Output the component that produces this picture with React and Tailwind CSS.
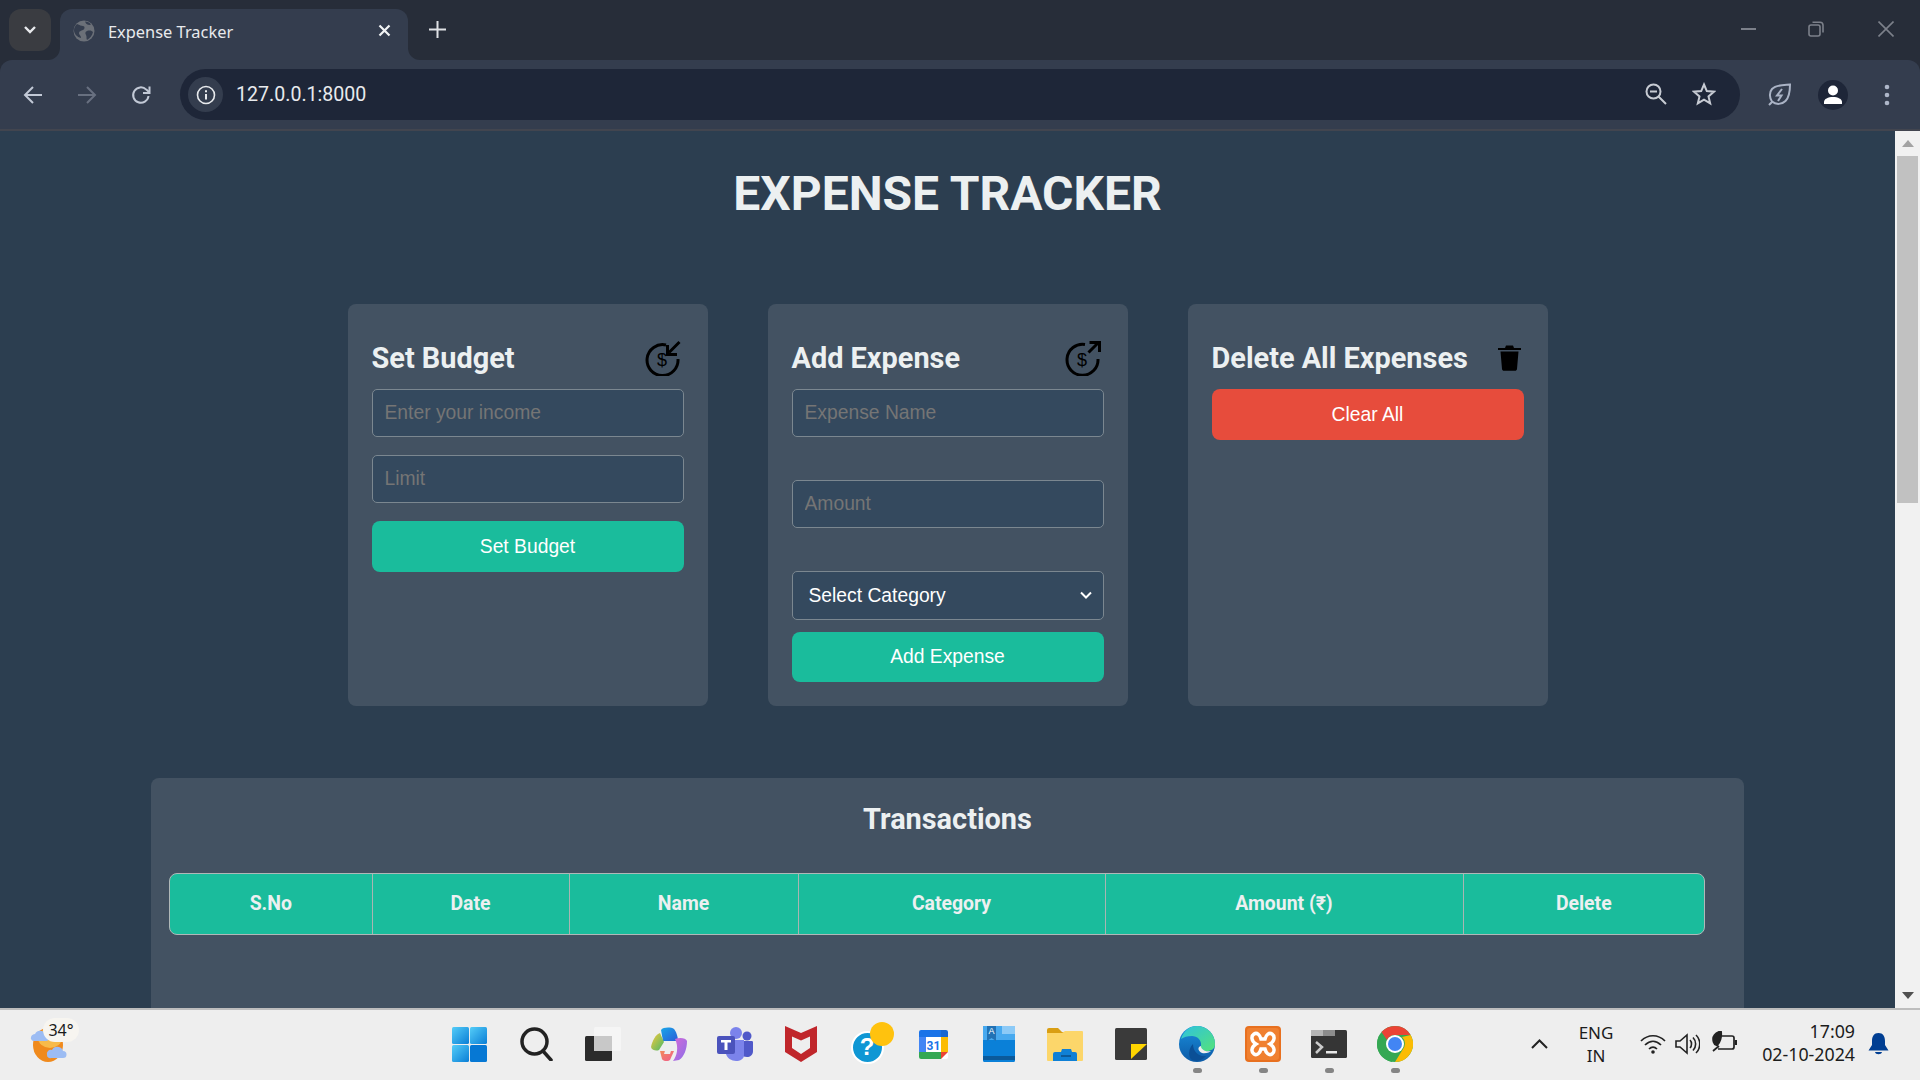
import React from "react";

const roboto = "font-['Roboto',sans-serif]";
const arial = "font-['Liberation_Sans',Arial,sans-serif]";
const noto = "font-['Noto_Sans',sans-serif]";

function Back({ color }) {
  return (
    <svg width="20" height="20" viewBox="0 0 20 20" fill="none" stroke={color} strokeWidth="2">
      <path d="M19 10H2M10 2l-8 8 8 8" />
    </svg>
  );
}
function Forward({ color }) {
  return (
    <svg width="20" height="20" viewBox="0 0 20 20" fill="none" stroke={color} strokeWidth="2">
      <path d="M1 10h17M10 2l8 8-8 8" />
    </svg>
  );
}
function Reload() {
  return (
    <svg width="20" height="20" viewBox="0 0 20 20" fill="none" stroke="#c2c9d6" strokeWidth="2">
      <path d="M17.5 11a7.7 7.7 0 1 1-2.2-6.4L18 7" />
      <path d="M18.5 1.5V8H12" strokeWidth="2" />
    </svg>
  );
}
function ToolbarCell({ children }) {
  return <div className="w-[54px] h-[51px] flex items-center justify-center shrink-0">{children}</div>;
}
function Concave({ side }) {
  return (
    <div className={side === "l" ? "absolute bottom-0 left-[-12px] w-3 h-3 bg-[#343d4e]" : "absolute bottom-0 right-[-12px] w-3 h-3 bg-[#343d4e]"}>
      <div className={side === "l" ? "w-full h-full bg-[#272d39] rounded-br-[12px]" : "w-full h-full bg-[#272d39] rounded-bl-[12px]"} />
    </div>
  );
}

function Browser() {
  return (
    <div className="shrink-0 bg-[#272d39]">
      <div className="h-[60px] flex items-start">
        <div className="ml-[9px] mt-[9px] w-[42px] h-[42px] rounded-[12px] bg-[#3a3c41] flex items-center justify-center">
          <svg width="14" height="10" viewBox="0 0 14 10" fill="none" stroke="#e8eaed" strokeWidth="2.4"><path d="M2 2l5 5 5-5" /></svg>
        </div>
        <div className="relative ml-[9px] mt-[9px] w-[348px] h-[51px] rounded-t-[12px] bg-[#343d4e] flex items-center">
          <Concave side="l" />
          <Concave side="r" />
          <svg className="ml-[13px] mb-[8px]" width="22" height="22" viewBox="0 0 22 22">
            <circle cx="11" cy="11" r="10.5" fill="#6b7078" />
            <path d="M4 4c3 1 4 2 6 2s2 3 0 4-4 1-4 3 2 2 2 5c-4-1-7-4-7-8 0-2 1-4 3-6zM14 11c3-1 5 0 6 1-1 4-3 6-6 8-1-2 0-3-1-5s-1-3 1-4zM12 1.500c2 0 5 1 6 3-2 1-4 0-5-1z" fill="#343d4e" />
          </svg>
          <span className={`ml-[13px] mb-[5px] text-[16.4px] text-[#e8eaed] whitespace-nowrap ${noto} w-[270px]`}>Expense Tracker</span>
          <svg className="mb-[9px]" width="13" height="13" viewBox="0 0 13 13" stroke="#f1f3f4" strokeWidth="2.2"><path d="M1.500 1.500l10 10M11.500 1.500l-10 10" /></svg>
        </div>
        <svg className="ml-[21px] mt-[21px]" width="17" height="17" viewBox="0 0 17 17" stroke="#dfe1e5" strokeWidth="2"><path d="M8.500 0v17M0 8.500h17" /></svg>
        <div className="flex-1" />
        <div className="flex items-center h-[58px]">
          <div className="w-[64px] flex justify-center"><div className="w-[15px] h-[2px] bg-[#7c808a]" /></div>
          <div className="w-[72px] flex justify-center">
            <svg width="16" height="16" viewBox="0 0 16 16" fill="none" stroke="#7c808a" strokeWidth="1.600"><rect x="1" y="4" width="11" height="11" rx="2" /><path d="M4.500 1.200h7.500a3 3 0 0 1 3 3v7.300" /></svg>
          </div>
          <div className="w-[68px] flex justify-center">
            <svg width="16" height="16" viewBox="0 0 16 16" stroke="#7c808a" strokeWidth="1.600"><path d="M.5.500l15 15M15.500.500l-15 15" /></svg>
          </div>
        </div>
      </div>
      <div className="h-[69px] bg-[#343d4e] rounded-t-[12px] flex items-start pt-[9px] pl-[6px] pr-[6px]">
        <ToolbarCell><Back color="#c2c9d6" /></ToolbarCell>
        <ToolbarCell><Forward color="#687080" /></ToolbarCell>
        <ToolbarCell><Reload /></ToolbarCell>
        <div className="ml-[12px] w-[1560px] h-[51px] rounded-full bg-[#1e2638] flex items-center pl-[8px]">
          <div className="w-[35px] h-[35px] rounded-full bg-[#343d4e] flex items-center justify-center">
            <svg width="20" height="20" viewBox="0 0 20 20" fill="none" stroke="#e8eaed" strokeWidth="1.600">
              <circle cx="10" cy="10" r="8.500" />
              <path d="M10 9v5.500M10 5.200v2" strokeWidth="2" />
            </svg>
          </div>
          <span className={`ml-[13px] text-[19.6px] text-[#e8eaed] ${roboto}`}>127.0.0.1:8000</span>
          <div className="flex-1" />
          <svg className="mr-[25px] mb-[2px]" width="22" height="22" viewBox="0 0 22 22" fill="none" stroke="#c7cbd3" strokeWidth="2">
            <circle cx="8.500" cy="8.500" r="7" />
            <path d="M5 8.500h7M13.500 13.500l7.500 7.500" />
          </svg>
          <svg className="mr-[24px] mb-[2px]" width="24" height="24" viewBox="0 0 24 24" fill="none" stroke="#c7cbd3" strokeWidth="2">
            <path d="M12 2.500l2.800 6.600 7.200.6-5.500 4.700 1.700 7-6.200-3.700-6.200 3.700 1.700-7L2 9.700l7.200-.6z" />
          </svg>
        </div>
        <div className="ml-[12px] flex">
          <ToolbarCell>
            <svg width="23" height="23" viewBox="0 0 23 23" fill="none" stroke="#aab3c5" strokeWidth="2">
              <path d="M22 1.500C16 2 8 1.500 4 6c-3 3.500-2.500 9 0 12.500 4 3.500 10 3 13.500-.5 4-4 4.500-10.500 4.500-16.500zM1 22l3-3" />
              <path d="M14 6l-5 6.500h4.500L10 18" />
            </svg>
          </ToolbarCell>
          <ToolbarCell>
            <div className="w-[30px] h-[30px] rounded-full bg-[#1e2638] flex items-center justify-center">
              <svg width="20" height="20" viewBox="0 0 20 20" fill="#fff">
                <circle cx="10" cy="5.500" r="5" />
                <path d="M1 19v-2c0-3 4-5 9-5s9 2 9 5v2z" />
              </svg>
            </div>
          </ToolbarCell>
          <ToolbarCell>
            <svg width="6" height="22" viewBox="0 0 6 22" fill="#aeb7c9"><circle cx="3" cy="3" r="2.300" /><circle cx="3" cy="11" r="2.300" /><circle cx="3" cy="19" r="2.300" /></svg>
          </ToolbarCell>
        </div>
      </div>
      <div className="h-[2px] bg-[#42454f]" />
    </div>
  );
}

function DollarText() {
  return <text x="17" y="25.500" textAnchor="middle" fontSize="18" fontFamily="Liberation Sans" fill="#000">$</text>;
}
function BudgetIcon() {
  return (
    <svg width="36" height="36" viewBox="0 0 36 36" fill="none" stroke="#000" strokeWidth="3">
      <path d="M21 5a15.500 15.500 0 1 0 12 14" />
      <path d="M34.500 2L24 12.500M22.500 5v9.500H32" strokeWidth="3" />
      <g stroke="none"><DollarText /></g>
    </svg>
  );
}
function ExpenseIcon() {
  return (
    <svg width="36" height="36" viewBox="0 0 36 36" fill="none" stroke="#000" strokeWidth="3">
      <path d="M20 4.500a15.500 15.500 0 1 0 13 14.500" />
      <path d="M23.500 12.500L34 2M24.500 2.500H34.500V12" strokeWidth="3" />
      <g stroke="none"><DollarText /></g>
    </svg>
  );
}
function TrashIcon() {
  return (
    <svg width="23" height="26" viewBox="0 0 23 26" fill="#000">
      <path d="M0 3h23v2H0zM8 .5h7L16 3H7zM2.500 6.500h18L19 24c-.1 1-1 1.800-2 1.800H6c-1 0-1.900-.8-2-1.800z" />
    </svg>
  );
}

const inputCls = `w-full h-[48px] rounded-[5px] border border-[#7b8790] bg-[#34495e] px-[12px] text-[19.3px] text-white placeholder:text-[#757575] outline-none ${arial}`;
const btnCls = `w-full rounded-[8px] text-[19.3px] text-white ${arial}`;

function Heading({ title, icon, right }) {
  return (
    <div className="h-[61px] flex items-center justify-between">
      <h2 className={`text-[28.9px] font-bold text-[#ecf0f1] whitespace-nowrap ${roboto}`}>{title}</h2>
      <div className={right}>{icon}</div>
    </div>
  );
}

function Cards() {
  return (
    <div className="flex gap-[60px] mt-[79px]">
      <section className="w-[360px] h-[401.500px] bg-[#435262] rounded-[8px] px-[24px] pt-[24px]">
        <Heading title="Set Budget" icon={<BudgetIcon />} right="mr-[3px] mb-[2px]" />
        <div className="flex flex-col gap-[18px]">
          <input className={inputCls} placeholder="Enter your income" />
          <input className={inputCls} placeholder="Limit" />
          <button className={`${btnCls} h-[51px] pt-[1px] bg-[#1abc9c]`}>Set Budget</button>
        </div>
      </section>
      <section className="w-[360px] h-[401.500px] bg-[#435262] rounded-[8px] px-[24px] pt-[24px]">
        <Heading title="Add Expense" icon={<ExpenseIcon />} right="mr-[3px] mb-[2px]" />
        <div className="flex flex-col">
          <input className={inputCls} placeholder="Expense Name" />
          <input className={`${inputCls} mt-[43px]`} placeholder="Amount" />
          <div className="relative mt-[43px]">
            <select className={`appearance-none block w-full h-[49px] rounded-[5px] border border-[#7b8790] bg-[#34495e] pl-[16px] pt-[1px] pr-[30px] text-[19.3px] text-white outline-none ${arial}`}>
              <option>Select Category</option>
            </select>
            <svg className="absolute right-[12px] top-[20px] pointer-events-none" width="12" height="8" viewBox="0 0 12 8" fill="none" stroke="#fff" strokeWidth="2"><path d="M1 1.500l5 5 5-5" /></svg>
          </div>
          <button className={`${btnCls} mt-[12px] h-[50px] bg-[#1abc9c]`}>Add Expense</button>
        </div>
      </section>
      <section className="w-[360px] h-[401.500px] bg-[#435262] rounded-[8px] px-[24px] pt-[24px]">
        <Heading title="Delete All Expenses" icon={<TrashIcon />} right="mr-[3px] mb-[2px]" />
        <button className={`${btnCls} h-[51px] pt-[1px] bg-[#e74c3c]`}>Clear All</button>
      </section>
    </div>
  );
}

function Transactions() {
  const cols = ["S.No", "Date", "Name", "Category", "Amount (₹)", "Delete"];
  return (
    <section className="mt-[72px] w-[1593px] h-[400px] shrink-0 bg-[#435262] rounded-[8px] pl-[18px] pr-[39px]">
      <h2 className={`h-[85px] mb-[10px] flex items-center justify-center pl-[21px] text-[28.9px] font-bold text-[#ecf0f1] ${roboto}`}>Transactions</h2>
      <div className={`w-[1536px] h-[62px] grid grid-cols-[202.500px_197px_229px_307px_358px_1fr] bg-[#1abc9c] rounded-[8px] border border-[#b0b8b8] text-[19.4px] font-bold text-[#ecf0f1] ${roboto}`}>
        {cols.map((c, i) => (
          <div key={c} className={`flex items-center justify-center ${i < 5 ? "border-r border-[#a9b5b2]" : ""}`}>{c}</div>
        ))}
      </div>
    </section>
  );
}

function Scrollbar() {
  return (
    <div className="w-[25px] shrink-0 bg-[#f1f1f1] flex flex-col items-center">
      <div className="h-[25px] flex items-center justify-center">
        <svg width="12" height="7" viewBox="0 0 12 7" fill="#a3a3a3"><path d="M6 0l6 7H0z" /></svg>
      </div>
      <div className="w-[21px] h-[347px] bg-[#c1c1c1]" />
      <div className="flex-1" />
      <div className="h-[25px] flex items-center justify-center">
        <svg width="12" height="7" viewBox="0 0 12 7" fill="#505050"><path d="M6 7l6-7H0z" /></svg>
      </div>
    </div>
  );
}

function Weather() {
  return (
    <div className="relative w-[46px] h-[46px] ml-[30px]">
      <svg width="46" height="46" viewBox="0 0 46 46">
        <ellipse cx="18" cy="27" rx="15" ry="17" fill="#f08a1d" />
        <ellipse cx="20" cy="20" rx="12" ry="10" fill="#f7ba4a" />
        <path d="M1 21a4 4 0 0 1 4-5 6 6 0 0 1 11 1 3 3 0 0 1 0 6H4a3 3 0 0 1-3-2z" fill="#9cbcf3" />
        <path d="M17 37a4 4 0 0 1 5-5 6 6 0 0 1 11 1 3.500 3.500 0 0 1 0 7H21a3 3 0 0 1-4-3z" fill="#9cbcf3" />
      </svg>
      <div className={`absolute left-[13px] top-[0px] w-[36px] h-[24px] rounded-full bg-[#f7f5f0] flex items-center justify-center text-[16px] text-[#1a1a1a] ${noto}`}>34°</div>
    </div>
  );
}

function WinIcon() {
  return (
    <svg width="35" height="35" viewBox="0 0 35 35">
      <defs>
        <linearGradient id="wa" x1="0" y1="0" x2="1" y2="1"><stop offset="0" stopColor="#54cdf8" /><stop offset="1" stopColor="#0a7ed6" /></linearGradient>
      </defs>
      <rect x="0" y="0" width="17" height="17" rx="1.500" fill="url(#wa)" />
      <rect x="18" y="0" width="17" height="17" rx="1.500" fill="url(#wa)" />
      <rect x="0" y="18" width="17" height="17" rx="1.500" fill="url(#wa)" />
      <rect x="18" y="18" width="17" height="17" rx="1.500" fill="#0678d4" />
    </svg>
  );
}
function SearchIcon() {
  return (
    <svg width="34" height="34" viewBox="0 0 34 34" fill="none" stroke="#222" strokeWidth="3.500">
      <circle cx="14.500" cy="14.500" r="12.500" />
      <path d="M23 24l8 9" strokeLinecap="round" />
    </svg>
  );
}
function TaskViewIcon() {
  return (
    <svg width="36" height="34" viewBox="0 0 36 34">
      <rect x="0" y="9" width="27" height="25" rx="1.500" fill="#2b2b2b" />
      <rect x="9" y="0" width="27" height="24" rx="1.500" fill="#f5f5f5" />
      <rect x="9" y="9" width="18" height="15" fill="#c8c8c8" />
    </svg>
  );
}
function CopilotIcon() {
  return (
    <svg width="36" height="34" viewBox="0 0 36 34">
      <defs>
        <linearGradient id="ca" x1="0" y1="0" x2="1" y2="1"><stop offset="0" stopColor="#1aa7e8" /><stop offset="1" stopColor="#2a5bd8" /></linearGradient>
        <linearGradient id="cb" x1="0" y1="0" x2="1" y2="1"><stop offset="0" stopColor="#d56ad8" /><stop offset="1" stopColor="#8a6ee8" /></linearGradient>
        <linearGradient id="cc" x1="0" y1="0" x2="1" y2="1"><stop offset="0" stopColor="#f7c93a" /><stop offset="1" stopColor="#49b868" /></linearGradient>
        <linearGradient id="cd" x1="0" y1="0" x2="1" y2="1"><stop offset="0" stopColor="#f28a5a" /><stop offset="1" stopColor="#ef5d8e" /></linearGradient>
      </defs>
      <path d="M10 3c2-3 10-3 13-1 2 2 4 8 4 12H12z" fill="url(#ca)" />
      <path d="M0 20c1-6 5-13 9-14l4 9-5 8c-2 1-7 1-8-3z" fill="url(#cc)" />
      <path d="M24 12c5-2 11-1 12 2 0 8-3 16-8 19l-6 1c4-5 6-14 2-22z" fill="url(#cb)" />
      <path d="M9 24h14l-4 9c-3 2-7 1-8-1z" fill="url(#cd)" />
      <path d="M16 17h6l-3 10h-6z" fill="#eee" />
    </svg>
  );
}
function TeamsIcon() {
  return (
    <svg width="36" height="34" viewBox="0 0 36 34">
      <circle cx="19" cy="6" r="6" fill="#7b83eb" />
      <circle cx="30" cy="9" r="4.500" fill="#5059c9" />
      <path d="M25 14h10c1 0 1 1 1 2v8c0 4-3 6-6 6s-4-1-5-2z" fill="#5059c9" />
      <path d="M9 13h18v15c0 4-4 6-8 6s-10-3-10-8z" fill="#7b83eb" />
      <rect x="0" y="9" width="18" height="18" rx="2" fill="#4b53bc" />
      <path d="M4 13h10v2.500h-3.500V23h-3v-7.500H4z" fill="#fff" />
    </svg>
  );
}
function McafeeIcon() {
  return (
    <svg width="32" height="36" viewBox="0 0 32 36">
      <path d="M0 0l16 7 16-7v26L16 36 0 26z" fill="#c0262b" />
      <path d="M7 10.500l9 4 9-4V22l-9 6-9-6z" fill="#eeeeee" />
    </svg>
  );
}
function HelpIcon() {
  return (
    <div className="relative w-[33px] h-[33px] mt-[6px]">
      <div className={`w-[33px] h-[33px] rounded-full bg-[#0f97d4] border-2 border-white flex items-center justify-center text-[24px] font-bold text-white ${arial}`}>?</div>
      <div className="absolute left-[19px] top-[-9px] w-[24px] h-[24px] rounded-full bg-[#ffc20e]" />
    </div>
  );
}
function CalIcon() {
  return (
    <svg width="29" height="29" viewBox="0 0 29 29">
      <rect width="29" height="29" rx="2" fill="#fff" />
      <path d="M0 2a2 2 0 0 1 2-2h20v7H0z" fill="#1a73e8" />
      <path d="M22 0h5a2 2 0 0 1 2 2v5h-7z" fill="#1967d2" />
      <path d="M22 7h7v15h-7z" fill="#fbbc04" />
      <path d="M0 22h22v7H2a2 2 0 0 1-2-2z" fill="#34a853" />
      <path d="M0 7h7v15H0z" fill="#4285f4" />
      <path d="M22 22h7l-7 7z" fill="#ea4335" />
      <text x="14.500" y="19.500" textAnchor="middle" fontSize="12" fontWeight="700" fontFamily="Roboto" fill="#1a73e8">31</text>
    </svg>
  );
}
function BookIcon() {
  return (
    <svg width="32" height="36" viewBox="0 0 32 36">
      <rect width="32" height="36" rx="1.500" fill="#0a80d8" />
      <rect x="0" width="32" height="14" fill="#47a9ef" />
      <rect x="19" width="13" height="8" fill="#8ccaf7" />
      <rect x="0" y="30" width="32" height="4" fill="#0b5a9b" />
      <path d="M4 0h9v15l-4.500-3L4 15z" fill="#2172b5" />
      <text x="8.500" y="8" textAnchor="middle" fontSize="9" fontFamily="Liberation Sans" fill="#fff">A</text>
    </svg>
  );
}
function FolderIcon() {
  return (
    <svg width="36" height="33" viewBox="0 0 36 33">
      <path d="M0 2a2 2 0 0 1 2-2h9l4 4h20a1 1 0 0 1 1 1v2H0z" fill="#d99e13" />
      <path d="M0 5h15l3-2h17a1 1 0 0 1 1 1v28a1 1 0 0 1-1 1H1a1 1 0 0 1-1-1z" fill="#fcd66a" />
      <path d="M6 26a2 2 0 0 1 2-2h6l1-3h9l1 3h3a2 2 0 0 1 2 2v7H6z" fill="#0f80d6" />
      <path d="M14 27h10v2H14z" fill="#0b5a9b" />
    </svg>
  );
}
function StickyIcon() {
  return (
    <svg width="32" height="32" viewBox="0 0 32 32">
      <rect width="32" height="32" rx="1.500" fill="#3a3a3a" />
      <path d="M16 16H32L16 31z" fill="#ffd500" />
    </svg>
  );
}
function EdgeIcon() {
  return (
    <svg width="36" height="36" viewBox="0 0 36 36">
      <defs>
        <linearGradient id="ea" x1="0" y1="0" x2="1" y2="1"><stop offset="0" stopColor="#2ec2e0" /><stop offset="1" stopColor="#54e27a" /></linearGradient>
        <linearGradient id="eb" x1="0" y1="0" x2="0" y2="1"><stop offset="0" stopColor="#1a8edc" /><stop offset="1" stopColor="#0c5aa6" /></linearGradient>
      </defs>
      <circle cx="18" cy="18" r="18" fill="url(#eb)" />
      <path d="M2 13C5 4 11 0 18 0c10 0 18 8 18 18 0 5-4 7-8 7-5 0-7-2-6-5 1-6-4-10-9-10-5 0-8 1-11 3z" fill="url(#ea)" />
      <path d="M14 18c0 8 6 13 13 12-3 4-9 6-14 4-4-3-4-11 1-16z" fill="#0b4f96" />
      <path d="M22 20c0 4 5 6 10 5-1 1-5 3-9 2-4-2-5-6-1-7z" fill="#eeeeee" />
    </svg>
  );
}
function XamppIcon() {
  return (
    <svg width="36" height="36" viewBox="0 0 36 36">
      <rect width="36" height="36" rx="4" fill="#e8701f" />
      <rect x="2" y="2" width="32" height="32" rx="3" fill="#f08030" />
      <path d="M9 8c3-2 6 1 7 5h4c1-4 4-7 7-5s3 7-2 10c5 3 5 8 2 10s-6-1-7-5h-4c-1 4-4 7-7 5s-3-7 2-10C6 15 6 10 9 8z" fill="none" stroke="#fff" strokeWidth="3.500" />
    </svg>
  );
}
function TerminalIcon() {
  return (
    <svg width="36" height="28" viewBox="0 0 36 28">
      <rect width="36" height="28" rx="1.500" fill="#353535" />
      <rect width="12" height="6" fill="#b5b5b5" />
      <rect x="12" width="12" height="6" fill="#8c8c8c" />
      <path d="M5 12l6 5-6 6" stroke="#ccc" strokeWidth="2.500" fill="none" />
      <rect x="15" y="21" width="11" height="2.500" fill="#e8e8e8" />
    </svg>
  );
}
function ChromeIcon() {
  return (
    <svg width="36" height="36" viewBox="0 0 36 36">
      <circle cx="18" cy="18" r="18" fill="#34a853" />
      <path d="M18 0a18 18 0 0 1 15.600 9H18a9 9 0 0 0-8 5L4.500 6A18 18 0 0 1 18 0z" fill="#ea4335" />
      <path d="M33.600 9A18 18 0 0 1 18 36l8-13a9 9 0 0 0-1-12z" fill="#fbbc04" />
      <path d="M2.400 9L10 23a9 9 0 0 0 8 4l-3 9C6 34 0 27 0 18c0-3 1-6 2.400-9z" fill="#34a853" />
      <circle cx="18" cy="18" r="9" fill="#fff" />
      <circle cx="18" cy="18" r="7" fill="#4285f4" />
    </svg>
  );
}

function TaskCell({ children, open }) {
  return (
    <div className="w-[66px] h-full shrink-0 flex flex-col items-center">
      <div className="h-[50px] flex items-center justify-center">{children}</div>
      <div className={open ? "mt-[-1px] w-[9px] h-[5px] rounded-full bg-[#858585]" : "h-[5px]"} />
    </div>
  );
}

function Taskbar() {
  return (
    <div className="h-[72px] shrink-0 bg-[#eeeeee] border-t-[2px] border-[#bdbdbd] flex">
      <div className="w-[436px] shrink-0 flex items-center pb-[8px]">
        <Weather />
      </div>
      <div className="flex pt-[9px]">
        <TaskCell><WinIcon /></TaskCell>
        <div className="w-[2px]" />
        <TaskCell><SearchIcon /></TaskCell>
        <TaskCell><TaskViewIcon /></TaskCell>
        <TaskCell><CopilotIcon /></TaskCell>
        <TaskCell><TeamsIcon /></TaskCell>
        <TaskCell><McafeeIcon /></TaskCell>
        <TaskCell><HelpIcon /></TaskCell>
        <TaskCell><CalIcon /></TaskCell>
        <TaskCell><BookIcon /></TaskCell>
        <TaskCell><FolderIcon /></TaskCell>
        <TaskCell><StickyIcon /></TaskCell>
        <TaskCell open><EdgeIcon /></TaskCell>
        <TaskCell open><XamppIcon /></TaskCell>
        <TaskCell open><TerminalIcon /></TaskCell>
        <TaskCell open><ChromeIcon /></TaskCell>
      </div>
      <div className={`flex-1 flex items-start text-[#1c1c1c] ${noto}`}>
        <svg className="ml-[103px] mt-[29px]" width="17" height="10" viewBox="0 0 17 10" fill="none" stroke="#222" strokeWidth="2"><path d="M1 9l7.500-7.500L16 9" /></svg>
        <div className="ml-[23px] mt-[11px] w-[50px] text-center text-[17px] leading-[23px]">ENG<br />IN</div>
        <svg className="ml-[19px] mt-[24px]" width="26" height="20" viewBox="0 0 26 20" fill="none" stroke="#222" strokeWidth="1.700">
          <path d="M1 7c7-7 17-7 24 0M5 11c5-5 11-5 16 0M9 15c2.500-2.500 5.500-2.500 8 0" />
          <circle cx="13" cy="18" r="1.800" fill="#222" stroke="none" />
        </svg>
        <svg className="ml-[9px] mt-[23px]" width="25" height="22" viewBox="0 0 25 22" fill="none" stroke="#222" strokeWidth="1.600">
          <path d="M1 8h4l7-6v18l-7-6H1z" />
          <path d="M15 7c2 2 2 6 0 8M18 4.500c3.500 3.500 3.500 9.500 0 13M21 2c5 5 5 13 0 18" />
        </svg>
        <svg className="ml-[12px] mt-[21px]" width="25" height="23" viewBox="0 0 25 23" fill="none" stroke="#222" strokeWidth="1.700">
          <path d="M10 5h10a2 2 0 0 1 2 2v9a2 2 0 0 1-2 2H6" />
          <path d="M24 9v5" strokeWidth="2.500" />
          <path d="M9 0C3 2 0 6 1.500 11c.5 2 1.500 3 3.500 3.500C8 12 10 6 9 0z" fill="#222" />
          <path d="M1 20l6-5" />
        </svg>
        <div className="ml-[25px] mt-[10px] w-[93px] text-[17.8px] leading-[23px] whitespace-nowrap flex flex-col items-end"><span>17:09</span><span>02-10-2024</span></div>
        <svg className="ml-[13px] mt-[23px]" width="21" height="23" viewBox="0 0 21 23" fill="#003e92">
          <path d="M10.500 0c4.500 0 6.500 3.500 6.500 8v4l3.500 5.500H.5L4 12V8c0-4.500 2-8 6.500-8zM7 19h7c-.5 3-6.500 3-7 0z" />
        </svg>
      </div>
    </div>
  );
}

export default function App() {
  return (
    <div className="w-[1920px] h-[1080px] overflow-hidden flex flex-col bg-[#2c3e50]">
      <Browser />
      <div className="flex-1 min-h-0 flex">
        <main className="flex-1 min-w-0 overflow-hidden flex flex-col items-center">
          <h1 className={`mt-[32px] h-[62px] flex items-center text-[48px] font-bold text-[#ecf0f1] whitespace-nowrap ${roboto}`}>EXPENSE TRACKER</h1>
          <Cards />
          <Transactions />
        </main>
        <Scrollbar />
      </div>
      <Taskbar />
    </div>
  );
}
